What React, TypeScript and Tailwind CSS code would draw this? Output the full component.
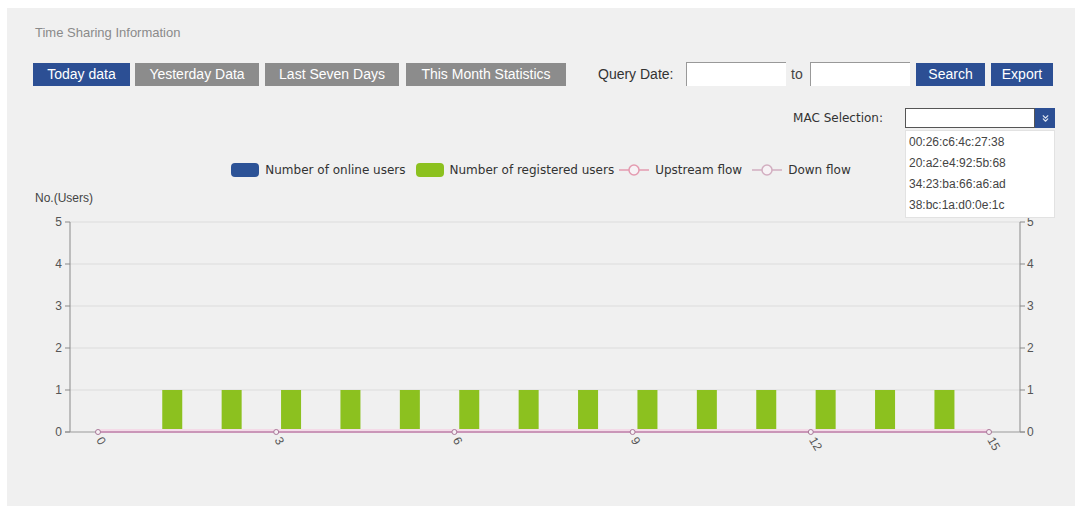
import React from 'react';
import { ChevronsDown } from 'lucide-react';

const font = { fontFamily: '"Liberation Sans", Arial, sans-serif' };
const wide = { fontFamily: '"DejaVu Sans", Verdana, sans-serif' };

const macs = ['00:26:c6:4c:27:38', '20:a2:e4:92:5b:68', '34:23:ba:66:a6:ad', '38:bc:1a:d0:0e:1c'];

// chart geometry (svg coords, origin = panel left / page y 206)
const yFor = (v: number) => 226 - v * 42;
const xFor = (v: number) => 91 + v * 59.4;
const bars = Array.from({ length: 14 }, (_, i) => i + 1.25);
const ticks = [0, 3, 6, 9, 12, 15];

const Chart: React.FC = () => (
  <svg width="1068" height="300" className="block">
    {[1, 2, 3, 4, 5].map((v) => (
      <line key={v} x1="63" x2="1013" y1={yFor(v)} y2={yFor(v)} stroke="#dcdcdc" strokeWidth="1" />
    ))}
    {/* axes */}
    <line x1="63" x2="63" y1={yFor(5)} y2={yFor(0)} stroke="#8a8a8a" />
    <line x1="1013" x2="1013" y1={yFor(5)} y2={yFor(0)} stroke="#8a8a8a" />
    <line x1="58" x2="1018" y1={yFor(0)} y2={yFor(0)} stroke="#9a9a9a" />
    {[0, 1, 2, 3, 4, 5].map((v) => (
      <g key={v} fontSize="12" fill="#555" style={font}>
        <line x1="58" x2="63" y1={yFor(v)} y2={yFor(v)} stroke="#8a8a8a" />
        <line x1="1013" x2="1018" y1={yFor(v)} y2={yFor(v)} stroke="#8a8a8a" />
        <text x="55" y={yFor(v) + 4} textAnchor="end">{v}</text>
        <text x="1020" y={yFor(v) + 4}>{v}</text>
      </g>
    ))}
    {bars.map((b) => (
      <rect key={b} x={xFor(b) - 10} y={yFor(1)} width="20" height="42" fill="#8cc11f" />
    ))}
    {/* flow lines */}
    <line x1={xFor(0)} x2={xFor(15)} y1={yFor(0) - 1} y2={yFor(0) - 1} stroke="#f4dbe8" strokeWidth="4" />
    <line x1={xFor(0)} x2={xFor(15)} y1={yFor(0)} y2={yFor(0)} stroke="#bd7fa8" strokeWidth="1.5" />
    {ticks.map((t) => (
      <g key={t}>
        <circle cx={xFor(t)} cy={yFor(0)} r="2.5" fill="#f6f0f4" stroke="#a87898" strokeWidth="1" />
        <text
          transform={`translate(${xFor(t) - 2}, ${yFor(0) + 8}) rotate(60)`}
          fontSize="12"
          fill="#555"
          style={font}
        >
          {t}
        </text>
      </g>
    ))}
  </svg>
);

const LineSwatch: React.FC<{ color: string }> = ({ color }) => (
  <svg width="30" height="14" className="block">
    <line x1="0" x2="30" y1="7" y2="7" stroke={color} strokeWidth="1.5" />
    <circle cx="15" cy="7" r="5" fill="#f7f2f5" stroke={color} strokeWidth="1.5" />
  </svg>
);

export default function App() {
  const btn = 'h-[23px] flex items-center justify-center text-[14px] text-white';
  return (
    <div className="w-[1082px] h-[509px] bg-white pt-[8px] pb-[3px] px-[7px]" style={font}>
      <div className="h-full bg-[#f0f0f0] flex flex-col">
        <div className="pl-[28px] pt-[16px] h-[34px] text-[13px] leading-[18px] text-[#8a8a8a]">Time Sharing Information</div>

        <div className="mt-[20px] flex items-center h-[24px] pl-[26px] pr-[22px]">
          <div className="flex items-center">
            <div className={`${btn} w-[97px] bg-[#2c4f94]`}>Today data</div>
            <div className={`${btn} w-[124px] ml-[5px] bg-[#8c8c8c] text-[#eeeeee]`}>Yesterday Data</div>
            <div className={`${btn} w-[134px] ml-[6px] bg-[#8c8c8c] text-[#eeeeee]`}>Last Seven Days</div>
            <div className={`${btn} w-[160px] ml-[7px] bg-[#8c8c8c] text-[#eeeeee]`}>This Month Statistics</div>
          </div>
          <div className="ml-auto flex items-center">
            <span className="text-[14px] text-[#333] w-[88px]">Query Date:</span>
            <div className="w-[100px] h-[24px] bg-white border-l border-t border-[#999]" />
            <span className="text-[14px] text-[#444] w-[24px] pl-[5px]">to</span>
            <div className="w-[100px] h-[24px] bg-white border-l border-t border-[#999]" />
            <div className={`${btn} w-[69px] ml-[6px] bg-[#2c4f94]`}>Search</div>
            <div className={`${btn} w-[62px] ml-[6px] bg-[#2c4f94]`}>Export</div>
          </div>
        </div>

        <div className="mt-[22px] flex items-center justify-end h-[20px] pr-[20px]">
          <span className="text-[12px] text-[#333] mr-[22px]" style={wide}>MAC Selection:</span>
          <div className="relative w-[150px] h-[20px] flex">
            <div className="flex-1 bg-white border border-[#555]" />
            <div className="w-[20px] h-[20px] bg-[#2c4f94] flex items-center justify-center">
              <ChevronsDown size={11} color="#dfe6f2" strokeWidth={2.5} />
            </div>
            <div className="absolute left-0 top-full mt-[2px] w-[150px] bg-white border border-[#e2e2e2] pt-[1px] pb-[1px] z-10">
              {macs.map((m) => (
                <div key={m} className="h-[21px] leading-[21px] pl-[3px] text-[12px] text-[#444]">{m}</div>
              ))}
            </div>
          </div>
        </div>

        <div className="mt-[34px] h-[16px] flex items-center justify-center text-[12px] text-[#333]" style={wide}>
          <div className="w-[28px] h-[14px] rounded-[4px] bg-[#2c5296]" />
          <span className="ml-[6px]">Number of online users</span>
          <div className="ml-[10px] w-[28px] h-[14px] rounded-[4px] bg-[#8cc11f]" />
          <span className="ml-[6px]">Number of registered users</span>
          <div className="ml-[5px]"><LineSwatch color="#e49bb0" /></div>
          <span className="ml-[6px]">Upstream flow</span>
          <div className="ml-[10px]"><LineSwatch color="#d2aec0" /></div>
          <span className="ml-[6px]">Down flow</span>
        </div>

        <div className="mt-[12px] h-[16px] pl-[28px] text-[12px] leading-[16px] text-[#444]">No.(Users)</div>
        <Chart />
      </div>
    </div>
  );
}
